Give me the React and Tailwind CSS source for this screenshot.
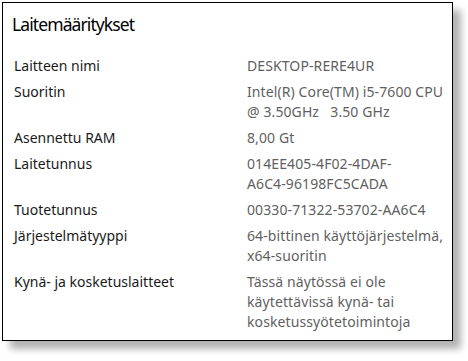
import React from 'react';

const specs = [
  { label: 'Laitteen nimi', value: ['DESKTOP-RERE4UR'] },
  { label: 'Suoritin', value: ['Intel(R) Core(TM) i5-7600 CPU', '@ 3.50GHz   3.50 GHz'] },
  { label: 'Asennettu RAM', value: ['8,00 Gt'] },
  { label: 'Laitetunnus', value: ['014EE405-4F02-4DAF-', 'A6C4-96198FC5CADA'] },
  { label: 'Tuotetunnus', value: ['00330-71322-53702-AA6C4'] },
  { label: 'Järjestelmätyyppi', value: ['64-bittinen käyttöjärjestelmä,', 'x64-suoritin'] },
  {
    label: 'Kynä- ja kosketuslaitteet',
    value: ['Tässä näytössä ei ole', 'käytettävissä kynä- tai', 'kosketussyötetoimintoja'],
  },
];

const App = () => {
  return (
    <div className="w-[468px] h-[361px] bg-white pt-[2px] pl-[2px] overflow-hidden font-['Noto_Sans',sans-serif]">
      <div className="w-[451px] h-[339px] bg-white border border-black shadow-[8px_8px_7px_rgba(0,0,0,0.3)] pl-[11px] pt-[7px]">
        <h1 className="text-[17.5px] leading-[28px] tracking-[-0.9px] text-black ml-[-2px]">Laitemääritykset</h1>

        <div className="mt-[18px] flex flex-col gap-[6px]">
          {specs.map((row) => (
            <div key={row.label} className="grid grid-cols-[233px_1fr] text-[14px] leading-[20px]">
              <div className="text-[#1a1a1a] whitespace-nowrap">{row.label}</div>
              <div className="text-[#5f5f5f] tracking-[0.1px]">
                {row.value.map((line) => (
                  <div key={line} className="whitespace-pre">{line}</div>
                ))}
              </div>
            </div>
          ))}
        </div>
      </div>
    </div>
  );
};

export default App;
